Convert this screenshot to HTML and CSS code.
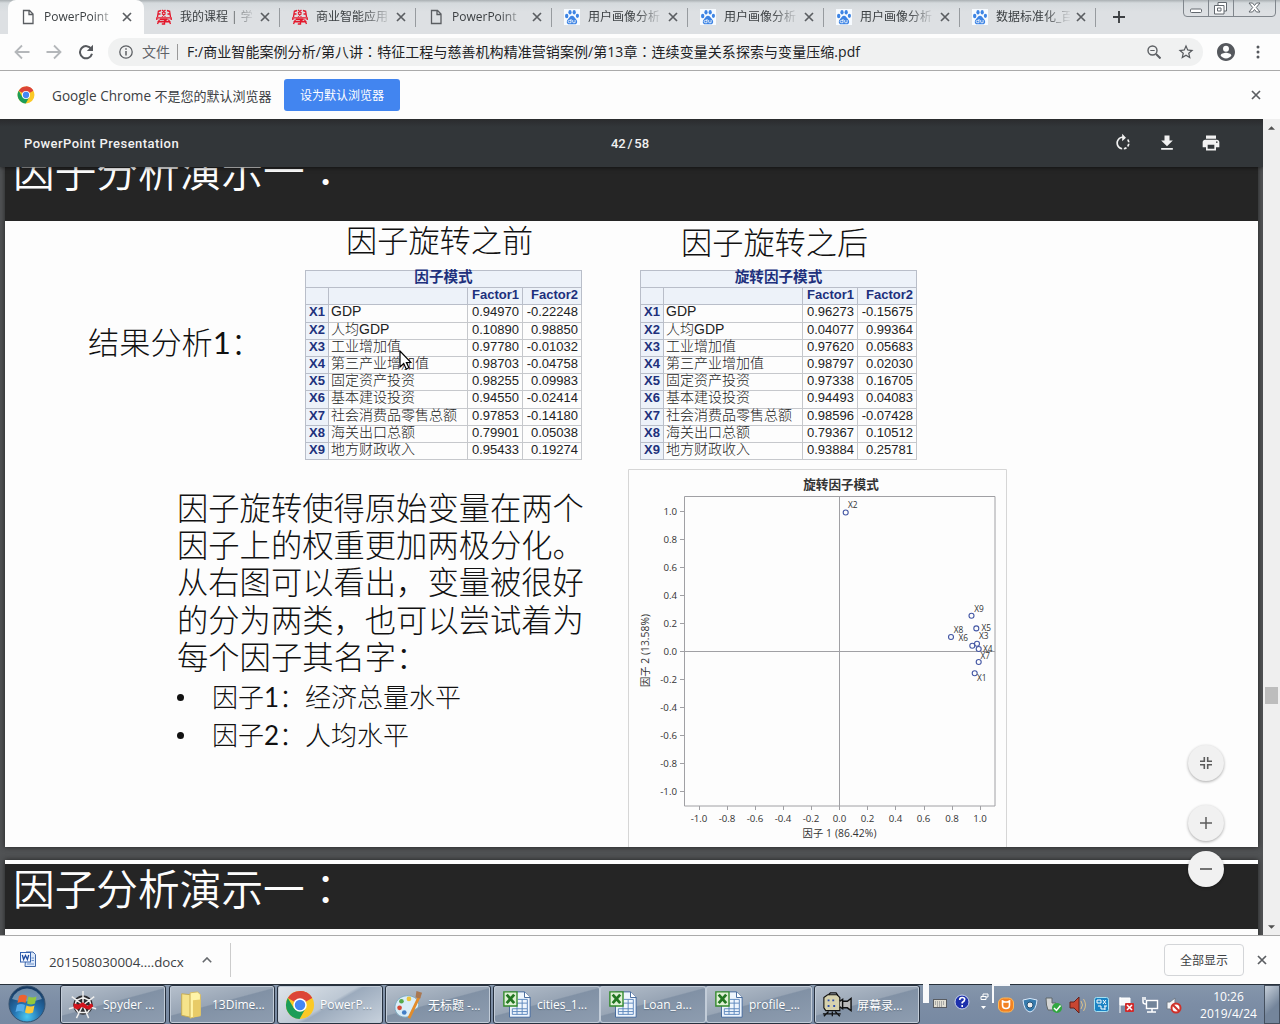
FILE: index.html
```html
<!DOCTYPE html>
<html lang="zh-CN">
<head>
<meta charset="utf-8">
<title>PowerPoint Presentation</title>
<link rel="stylesheet" href="styles.css">
</head>
<body>
<svg class="defs" width="0" height="0">
  <symbol id="x" viewBox="0 0 10 10"><path d="M1 1l8 8M9 1l-8 8" fill="none" stroke="currentColor" stroke-width="1.7"/></symbol>
  <symbol id="doc" viewBox="0 0 16 16"><path d="M3.500 1.500h6l3.500 3.500v9.500h-9.500zM9 1.500v4h4" fill="none" stroke="#5a5d61" stroke-width="1.300"/></symbol>
  <symbol id="xue" viewBox="0 0 16 16"><path d="M2.500 1.500L1.500 8M2 2.500l3-1M2 5h2.500M6 1l3.500 3M9.500 1L6 4M6 4.500L9.500 7.500M9.500 4.500L6 7.500M11 1.500l3 1M11.500 5H14M13.500 1.500l1 6.500M.8 11V8.800h14.400V11M4 10.500h7.500L8.500 12v3H5.800M1.500 12.700h13M3.500 10.500L1.500 15M12.500 10.500l2 4.500" fill="none" stroke="#e3172b" stroke-width="1.350"/></symbol>
  <symbol id="paw" viewBox="0 0 16 16"><rect width="16" height="16" fill="#f7fbff"/><g fill="#3d84e4"><ellipse cx="2.700" cy="7" rx="1.700" ry="2.200"/><ellipse cx="6" cy="3.200" rx="1.600" ry="2.300"/><ellipse cx="10.200" cy="3.200" rx="1.600" ry="2.300"/><ellipse cx="13.400" cy="6.800" rx="1.600" ry="2.100"/><path d="M8 6.800c2 0 2.600 2 4 3.400 1.900 1.800 1.400 5-1.200 5.100H5.200C2.500 15.200 2.100 12 4 10.200 5.400 8.800 6 6.800 8 6.800z"/></g><path d="M7 10v3.700H5.300a1.100 1.100 0 0 1 0-2.300H7M8.700 11v2q0 .7.700.7h1.700V11" fill="none" stroke="#fff" stroke-width=".8"/></symbol>
  <symbol id="chrome" viewBox="0 0 32 32"><circle cx="16" cy="16" r="15" fill="#fbc926"/><path d="M16 16L3 8.500A15 15 0 0 1 29 8.500z" fill="#dc4437"/><path d="M16 1a15 15 0 0 1 13 7.500H16z" fill="#dc4437"/><path d="M3 8.500A15 15 0 0 0 15.500 31L22 19.500l-6-3.500-6.500 3.500z" fill="#1c9d58"/><circle cx="16" cy="16" r="7.200" fill="#fff"/><circle cx="16" cy="16" r="5.600" fill="#4486f4"/></symbol>
  <symbol id="xls" viewBox="0 0 32 32"><path d="M8 2h16l6 6v21H8z" fill="#eef5fd" stroke="#41669b"/><path d="M24 2v6h6" fill="#fff" stroke="#41669b"/><path d="M11 20h16v6H11zM16 14h11v6M16 14v12M21.500 10v16M17 10h10v4M11 23h16" fill="none" stroke="#5c86bd"/><path d="M2 2h14v15H2z" fill="#dff0d5" stroke="#348b2e" stroke-width="1.500"/><path d="M5 5l8 9M13 5l-8 9" stroke="#237722" stroke-width="3"/></symbol>
</svg>

<div class="window">
  <header class="tabstrip">
    <div class="tab active"><svg class="fav"><use href="#doc"/></svg><span>PowerPoint</span><svg class="close"><use href="#x"/></svg></div>
    <div class="tab"><svg class="fav"><use href="#xue"/></svg><span>我的课程 | 学</span><svg class="close"><use href="#x"/></svg></div>
    <div class="tab"><svg class="fav"><use href="#xue"/></svg><span>商业智能应用</span><svg class="close"><use href="#x"/></svg></div>
    <div class="tab"><svg class="fav"><use href="#doc"/></svg><span>PowerPoint</span><svg class="close"><use href="#x"/></svg></div>
    <div class="tab"><svg class="fav"><use href="#paw"/></svg><span>用户画像分析</span><svg class="close"><use href="#x"/></svg></div>
    <div class="tab"><svg class="fav"><use href="#paw"/></svg><span>用户画像分析</span><svg class="close"><use href="#x"/></svg></div>
    <div class="tab"><svg class="fav"><use href="#paw"/></svg><span>用户画像分析</span><svg class="close"><use href="#x"/></svg></div>
    <div class="tab"><svg class="fav"><use href="#paw"/></svg><span>数据标准化_百</span><svg class="close"><use href="#x"/></svg></div>
    <svg class="newtab" viewBox="0 0 12 12"><path d="M6 0v12M0 6h12" stroke="#3d4043" stroke-width="1.900"/></svg>
    <svg class="winctl" viewBox="0 0 94 18"><path d="M.5 0v13q0 3.500 3.500 3.500h85q3.500 0 3.500-3.500V0M25.500 0v16M50.500 0v16" fill="none" stroke="#80868c"/><g fill="#fff" stroke="#62686e"><rect x="7.500" y="9" width="11" height="3.500" rx="1"/><path d="M35 2.500h8.500V11H41v3h-9.500V5.500H35z"/><path d="M34.500 8h3.500v3h-3.500zM35 5.500h6V11" fill="none"/><path d="M66 3h3.500l2 2.500L73.500 3H77l-3.700 4.500L77 12h-3.500l-2-2.500-2 2.500H66l3.700-4.500z"/></g></svg>
  </header>

  <nav class="toolbar">
    <svg class="nav" viewBox="0 0 16 16"><path d="M15.500 8H2M8 1.500L1.500 8 8 14.500" fill="none" stroke="#b4b7ba" stroke-width="1.800"/></svg>
    <svg class="nav" viewBox="0 0 16 16"><path d="M.5 8H14M8 1.500L14.500 8 8 14.500" fill="none" stroke="#b4b7ba" stroke-width="1.800"/></svg>
    <svg class="nav reload" viewBox="0 0 16 16"><path d="M13.300 5A6.100 6.100 0 1 0 14 9.800" fill="none" stroke="#56595d" stroke-width="2"/><path d="M15 .8V7H8.800z" fill="#56595d"/></svg>
    <div class="omnibox">
      <svg class="info" viewBox="0 0 14 14"><circle cx="7" cy="7" r="6.200" fill="none" stroke="#5c5f63" stroke-width="1.300"/><path d="M7 6v4.500M7 3.200v1.500" stroke="#5c5f63" stroke-width="1.500"/></svg>
      <span class="scheme">文件</span>
      <span class="url">F:/商业智能案例分析/第八讲<i lang="zh-TW">：</i>特征工程与慈善机构精准营销案例/第13章<i lang="zh-TW">：</i>连续变量关系探索与变量压缩.pdf</span>
      <svg class="zoomicon" viewBox="0 0 14 14"><circle cx="5.500" cy="5.500" r="4.500" fill="none" stroke="#5c5f63" stroke-width="1.400"/><path d="M9 9l4.500 4.500" stroke="#5c5f63" stroke-width="2"/><path d="M3.300 5.500h4.400" stroke="#5c5f63"/></svg>
      <svg class="star" viewBox="0 0 24 24"><path d="M22 9.240l-7.190-.62L12 2 9.190 8.630 2 9.240l5.460 4.730L5.820 21 12 17.270 18.180 21l-1.630-7.030L22 9.240zM12 15.400l-3.760 2.270 1-4.280-3.320-2.880 4.380-.38L12 6.100l1.710 4.040 4.380.38-3.320 2.880 1 4.280L12 15.400z" fill="#55585c"/></svg>
    </div>
    <svg class="avatar" viewBox="2 2 20 20"><path d="M12 2C6.480 2 2 6.480 2 12s4.480 10 10 10 10-4.480 10-10S17.520 2 12 2zm0 3a3.300 3.300 0 1 1 0 6.600A3.300 3.300 0 0 1 12 5zm0 14.200c-2.500 0-4.710-1.280-6-3.220.03-1.990 4-3.080 6-3.080 1.990 0 5.970 1.090 6 3.080-1.290 1.940-3.500 3.220-6 3.220z" fill="#55585d"/></svg>
    <svg class="menu" viewBox="0 0 4 14"><g fill="#55585d"><circle cx="2" cy="2" r="1.500"/><circle cx="2" cy="7" r="1.500"/><circle cx="2" cy="12" r="1.500"/></g></svg>
  </nav>

  <section class="infobar">
    <svg class="chromelogo"><use href="#chrome"/></svg>
    <span class="msg"><b>Google Chrome</b> 不是您的默认浏览器</span>
    <button>设为默认浏览器</button>
    <svg class="close"><use href="#x"/></svg>
  </section>

  <main class="viewer">
    <div class="pdf">
      <div class="pdfbar">
        <span class="doctitle">PowerPoint Presentation</span>
        <span class="page">42 / 58</span>
        <div class="tools">
          <svg viewBox="0 0 24 24"><path d="M15.550 5.550L11 1v3.070C7.060 4.560 4 7.920 4 12s3.050 7.440 7 7.930v-2.020c-2.840-.48-5-2.940-5-5.910s2.160-5.430 5-5.910V10l4.550-4.450zM19.930 11c-.17-1.390-.72-2.730-1.620-3.890l-1.420 1.420c.54.75.88 1.600 1.020 2.470h2.020zM13 17.900v2.020c1.390-.17 2.740-.71 3.900-1.610l-1.440-1.440c-.75.54-1.590.89-2.460 1.030zm3.890-2.420l1.420 1.410c.9-1.160 1.450-2.500 1.620-3.890h-2.020c-.14.87-.48 1.720-1.020 2.480z"/></svg>
          <svg viewBox="0 0 24 24"><path d="M19 9h-4V3H9v6H5l7 7 7-7zM5 18v2h14v-2H5z"/></svg>
          <svg viewBox="0 0 24 24"><path d="M19 8H5c-1.660 0-3 1.340-3 3v6h4v4h12v-4h4v-6c0-1.660-1.340-3-3-3zm-3 11H8v-5h8v5zm3-7c-.55 0-1-.45-1-1s.45-1 1-1 1 .45 1 1-.45 1-1 1zm-1-9H6v4h12V3z"/></svg>
        </div>
      </div>
      <article class="slide">
        <h1 class="current">因子分析演示一<i lang="zh-TW">：</i></h1>
        <div class="body">
          <div class="col">
            <div class="top">
              <p class="result">结果分析<b>1</b>：</p>
              <div class="figure before">
                <h2>因子旋转之前</h2>
                <table>
                  <colgroup><col class="c1"><col class="c2"><col class="c3"><col class="c4"></colgroup>
                  <tr class="head"><th colspan="4">因子模式</th></tr>
                  <tr class="head sub"><th></th><th></th><th>Factor1</th><th>Factor2</th></tr>
                  <tr><th>X1</th><td>GDP</td><td>0.94970</td><td>-0.22248</td></tr>
                  <tr><th>X2</th><td>人均GDP</td><td>0.10890</td><td>0.98850</td></tr>
                  <tr><th>X3</th><td>工业增加值</td><td>0.97780</td><td>-0.01032</td></tr>
                  <tr><th>X4</th><td>第三产业增加值</td><td>0.98703</td><td>-0.04758</td></tr>
                  <tr><th>X5</th><td>固定资产投资</td><td>0.98255</td><td>0.09983</td></tr>
                  <tr><th>X6</th><td>基本建设投资</td><td>0.94550</td><td>-0.02414</td></tr>
                  <tr><th>X7</th><td>社会消费品零售总额</td><td>0.97853</td><td>-0.14180</td></tr>
                  <tr><th>X8</th><td>海关出口总额</td><td>0.79901</td><td>0.05038</td></tr>
                  <tr><th>X9</th><td>地方财政收入</td><td>0.95433</td><td>0.19274</td></tr>
                </table>
              </div>
            </div>
            <div class="notes">
              <p>因子旋转使得原始变量在两个<br>因子上的权重更加两极分化。<br>从右图可以看出，变量被很好<br>的分为两类，也可以尝试着为<br>每个因子其名字：</p>
              <ul><li>因子<b>1</b>：经济总量水平</li><li>因子<b>2</b>：人均水平</li></ul>
            </div>
          </div>
          <div class="col">
            <div class="top">
              <div class="figure after">
                <h2>因子旋转之后</h2>
                <table>
                  <colgroup><col class="c1"><col class="c2"><col class="c3"><col class="c4"></colgroup>
                  <tr class="head"><th colspan="4">旋转因子模式</th></tr>
                  <tr class="head sub"><th></th><th></th><th>Factor1</th><th>Factor2</th></tr>
                  <tr><th>X1</th><td>GDP</td><td>0.96273</td><td>-0.15675</td></tr>
                  <tr><th>X2</th><td>人均GDP</td><td>0.04077</td><td>0.99364</td></tr>
                  <tr><th>X3</th><td>工业增加值</td><td>0.97620</td><td>0.05683</td></tr>
                  <tr><th>X4</th><td>第三产业增加值</td><td>0.98797</td><td>0.02030</td></tr>
                  <tr><th>X5</th><td>固定资产投资</td><td>0.97338</td><td>0.16705</td></tr>
                  <tr><th>X6</th><td>基本建设投资</td><td>0.94493</td><td>0.04083</td></tr>
                  <tr><th>X7</th><td>社会消费品零售总额</td><td>0.98596</td><td>-0.07428</td></tr>
                  <tr><th>X8</th><td>海关出口总额</td><td>0.79367</td><td>0.10512</td></tr>
                  <tr><th>X9</th><td>地方财政收入</td><td>0.93884</td><td>0.25781</td></tr>
                </table>
              </div>
            </div>
            <svg class="chart" viewBox="628 469 380 378">
              <path d="M628.500 847V469.500H1006.500V847" fill="none" stroke="#d6d6d6"/>
              <text class="ctitle" x="841" y="488.500" text-anchor="middle">旋转因子模式</text>
              <path d="M684.500 496.500h310.500v309.500H684.500zM839.500 496v314M680 651.500h315" fill="none" stroke="#a0a0a4"/>
              <path d="M680 511.500h5M680 539.500h5M680 567.500h5M680 595.500h5M680 623.500h5M680 679.500h5M680 707.500h5M680 735.500h5M680 763.500h5M680 791.500h5M699.500 806v4M727.500 806v4M755.500 806v4M783.500 806v4M811.500 806v4M867.500 806v4M895.500 806v4M924.500 806v4M952.500 806v4M980.500 806v4" stroke="#a0a0a4"/>
              <g text-anchor="end">
                <text x="677" y="515">1.0</text><text x="677" y="543">0.8</text><text x="677" y="571">0.6</text><text x="677" y="599">0.4</text><text x="677" y="627">0.2</text><text x="677" y="655">0.0</text><text x="677" y="683">-0.2</text><text x="677" y="711">-0.4</text><text x="677" y="739">-0.6</text><text x="677" y="767">-0.8</text><text x="677" y="795">-1.0</text>
              </g>
              <g text-anchor="middle">
                <text x="699" y="822">-1.0</text><text x="727" y="822">-0.8</text><text x="755" y="822">-0.6</text><text x="783" y="822">-0.4</text><text x="811" y="822">-0.2</text><text x="839.500" y="822">0.0</text><text x="867.500" y="822">0.2</text><text x="895.500" y="822">0.4</text><text x="923.500" y="822">0.6</text><text x="952" y="822">0.8</text><text x="980" y="822">1.0</text>
              </g>
              <text class="axis" x="802.500" y="837" textLength="74">因子 1 (86.42%)</text>
              <text class="axis" transform="translate(649 687) rotate(-90)" textLength="73">因子 2 (13.58%)</text>
              <g fill="none" stroke="#4457a4" stroke-width="1.100"><circle cx="845.700" cy="512.500" r="2.500"/><circle cx="971.500" cy="615.700" r="2.500"/><circle cx="976.300" cy="628.400" r="2.500"/><circle cx="951" cy="637" r="2.500"/><circle cx="977" cy="643.700" r="2.500"/><circle cx="972.300" cy="645.700" r="2.500"/><circle cx="978.700" cy="649" r="2.500"/><circle cx="978.700" cy="662" r="2.500"/><circle cx="974.700" cy="673.300" r="2.500"/></g>
              <g class="pt"><text x="848" y="508">X2</text><text x="974.300" y="612">X9</text><text x="981.500" y="631">X5</text><text x="953.800" y="633">X8</text><text x="979" y="639">X3</text><text x="958.500" y="641">X6</text><text x="983" y="652">X4</text><text x="980.500" y="659">X7</text><text x="977" y="681">X1</text></g>
            </svg>
          </div>
        </div>
      </article>
      <article class="slide next">
        <h1>因子分析演示一<i lang="zh-TW">：</i></h1>
      </article>
      <svg class="cursor" viewBox="0 0 13 20"><path d="M1 1v16l3.700-3.500 2.500 5.500 2.700-1.200-2.500-5.300H12z" fill="#fff" stroke="#000" stroke-width="1.200"/></svg>
      <div class="fabs">
        <div class="fab fit"><svg viewBox="0 0 12 12"><path d="M4.300 0v4.300H0M7.700 0v4.300H12M4.300 12V7.700H0M7.700 12V7.700H12" fill="none" stroke="#5c5c5c" stroke-width="1.600"/></svg></div>
        <div class="fab"><svg viewBox="0 0 12 12"><path d="M6 0v12M0 6h12" stroke="#5c5c5c" stroke-width="1.500"/></svg></div>
        <div class="fab out"><svg viewBox="0 0 12 12"><path d="M0 6h12" stroke="#5c5c5c" stroke-width="1.700"/></svg></div>
      </div>
    </div>
    <div class="scroll">
      <svg viewBox="0 0 8 4"><path d="M0 4l4-4 4 4z" fill="#505050"/></svg>
      <div class="thumb"></div>
      <svg viewBox="0 0 8 4"><path d="M0 0l4 4 4-4z" fill="#505050"/></svg>
    </div>
  </main>

  <section class="downloads">
    <svg class="word" viewBox="0 0 16 16"><path d="M6 1h7l2.500 2.500V15.500H5z" fill="#dbe8fa" stroke="#4168a8"/><path d="M11.500 7H14M11.500 9.500H14M7 13h7" stroke="#6c90c8"/><rect x=".5" y="1.500" width="10" height="9.500" fill="#f4f8ff" stroke="#3563b0"/><path d="M2.300 4l1.300 4.500L5.500 4.500l1.900 4L8.700 4" fill="none" stroke="#1e4b9f" stroke-width="1.300"/></svg>
    <span class="file">201508030004....docx</span>
    <svg class="chev" viewBox="0 0 10 6"><path d="M.8 5.300L5 1l4.200 4.300" fill="none" stroke="#66696d" stroke-width="1.600"/></svg>
    <button>全部显示</button>
    <svg class="close"><use href="#x"/></svg>
  </section>

  <footer class="taskbar">
    <svg class="start" viewBox="0 0 38 38"><defs><radialGradient id="orb" cx=".5" cy=".85" r=".8"><stop offset="0" stop-color="#49c9f2"/><stop offset=".45" stop-color="#2573b1"/><stop offset="1" stop-color="#173a63"/></radialGradient></defs><circle cx="19" cy="19" r="18" fill="url(#orb)" stroke="#34516e"/><path d="M4 14a16 16 0 0 1 30 0q-15 5-30 0z" fill="#a9bccd" opacity=".6"/><path d="M11 11q4-2.500 8 0l-1.500 7q-4-2-8 0z" fill="#ee6230"/><path d="M20.500 11.500q4 2 8 0L27 18.500q-4 2-8 0z" fill="#93c83e"/><path d="M9 20q4-2.200 8 0l-1.500 7q-4-2.200-8 0z" fill="#56acea"/><path d="M18.500 20.500q4 2 8 0L25 27.500q-4 2-8 0z" fill="#fcc93b"/></svg>
    <div class="task first"><svg viewBox="0 0 32 32"><circle cx="16" cy="16" r="10.500" fill="#2b2b2e"/><path d="M16 16V1M16 16l12-9M16 16l14 4M16 16l6 14M16 16L9 30M16 16L1 20M16 16L4 7M16 8l7 3 2 7-4 6H11l-4-6 2-7z" fill="none" stroke="#eee" stroke-width="1.600"/><path d="M6 14l5 1.500 5-2.500 5 4 4-3 2 3-4 4-4-1-4-2-5 3-4-2z" fill="#d2141d"/></svg><span>Spyder ...</span></div>
    <div class="task"><svg viewBox="0 0 32 32"><path d="M5 4l9 1v24l-9-2z" fill="#f6e38b" stroke="#c7ac50"/><path d="M14 3l8-1 3 3v22l-11 3z" fill="#fff4a8" stroke="#d6bc61"/><path d="M17 11l8-1v18l-8 1z" fill="#e8cb67"/></svg><span>13Dime...</span></div>
    <div class="task lit"><svg><use href="#chrome"/></svg><span>PowerP...</span></div>
    <div class="task"><svg viewBox="0 0 32 32"><path d="M4 12C9 4 24 4 27 13c2 7-3 7-6 9-3 3-2 7-8 7C4 29-1 20 4 12z" fill="#d9edf8" stroke="#7ba5bd"/><circle cx="9" cy="12" r="2.500" fill="#56a94d"/><circle cx="17" cy="9.500" r="2.500" fill="#ecc43b"/><circle cx="7" cy="19" r="2.500" fill="#d84a36"/><circle cx="12" cy="24" r="2.500" fill="#437ec6"/><path d="M17 30L28 7" stroke="#e28c2b" stroke-width="3"/><path d="M25 1l6 2-2 6-5-1z" fill="#a97752"/></svg><span>无标题 -...</span></div>
    <div class="group">
      <div class="task"><svg><use href="#xls"/></svg><span>cities_1...</span></div>
      <div class="task"><svg><use href="#xls"/></svg><span>Loan_a...</span></div>
      <div class="task"><svg><use href="#xls"/></svg><span>profile_...</span></div>
    </div>
    <div class="task rec"><svg viewBox="0 0 32 26"><path d="M2 5l4-3h10l3 3v14H4l-2-3z" fill="#d6d2ae" stroke="#111" stroke-width="1.200"/><path d="M19 9l3-2v10l-3-2M22 9h5l4-3v13l-4-3h-5" fill="#bbb" stroke="#111" stroke-width="1.500"/><path d="M7 20l-5 5M11 20v5M14 20l5 5M1 22.500h19M7 2l2-2h6l2 3" fill="none" stroke="#111" stroke-width="1.400"/><path d="M6 7h2v2H6zM11 7h2v2h-2zM6 13h2v2H6zM12 13h2v2h-2z" fill="#2c4eae"/></svg><span>屏幕录...</span></div>
    <svg class="tray" viewBox="920 984 280 40">
      <path d="M923 984h6v19h-6zM992 984h2v19h-2zM992 984h18v2h-18z" fill="#f8f9fb"/>
      <rect x="933.500" y="999.500" width="13" height="8" fill="#e2dfd3" stroke="#595c61"/><path d="M935 1002h10M935 1004h10M937 1006h6" stroke="#70747a" stroke-dasharray="1 1"/>
      <circle cx="962" cy="1002" r="7" fill="#1c30ac" stroke="#c8d3ec"/><path d="M959.700 1000q0-2.500 2.500-2.500t2.500 2q0 1.500-2.500 3v1M962.200 1005v2" fill="none" stroke="#fff" stroke-width="1.600"/>
      <path d="M981 996.500h5v3h-5zM983 996v-2h5v3h-2" fill="none" stroke="#fff"/><path d="M981 1006h5l-2.500 3z" fill="#fff"/>
      <rect x="998.500" y="998" width="15" height="14" rx="5" fill="#f28122" stroke="#ffba58"/><path d="M1002.500 1001l2 1h3l2-1v4q0 3.500-3.500 3.500t-3.500-3.500z" fill="none" stroke="#fff" stroke-width="1.600"/>
      <path d="M1023 1000q7-3 14 0-1 11-7 12-6-1-7-12z" fill="#377bad" stroke="#dbeafb"/><circle cx="1030" cy="1005" r="3" fill="#eee" stroke="#265174"/>
      <path d="M1046 998h6v5h4v7h-8q-2-4-2-12" fill="#d1d3d3" stroke="#5e6668"/><circle cx="1057" cy="1008" r="5" fill="#32a740"/><path d="M1054 1008l2.500 2.500 4-5" fill="none" stroke="#fff" stroke-width="1.500"/>
      <path d="M1070 1002h4l5-5v16l-5-5h-4z" fill="#c84632" stroke="#65211b"/><path d="M1081 1001q3 4 0 8M1083.500 999q4 6 0 12" fill="none" stroke="#dac18b"/>
      <rect x="1094.500" y="997.500" width="14" height="14" rx="2" fill="#1b83c4" stroke="#a3e1f4"/><path d="M1097 1000h4v3h-4zM1103 1000l3 4M1106 1000l-3 4M1098 1006h3v3h4M1104 1006h3M1105 1006v4" fill="none" stroke="#fff"/>
      <path d="M1120 997v16M1120 998h10v7h-10z" fill="#f7f8fa" stroke="#fff"/><rect x="1125" y="1003" width="9" height="9" rx="1" fill="#d22a2b"/><path d="M1127 1005l5 5M1132 1005l-5 5" stroke="#fff" stroke-width="1.600"/>
      <rect x="1146.500" y="1000.500" width="11" height="8" fill="#728499" stroke="#fff" stroke-width="1.400"/><path d="M1143 997v5q0 2 3 2M1145 997v3M1152 1009v3M1147 1012h9" fill="none" stroke="#fff" stroke-width="1.500"/>
      <path d="M1167 1002h3l5-4v15l-5-4h-3z" fill="#f2f4f7" stroke="#727d89"/><circle cx="1176" cy="1008" r="4.500" fill="#fff" stroke="#cf312a" stroke-width="2"/><path d="M1173 1005l6 6" stroke="#cf312a" stroke-width="2"/>
    </svg>
    <div class="clock"><span>10:26</span><span>2019/4/24</span></div>
    <div class="peek"></div>
  </footer>
</div>
</body>
</html>
```
FILE: styles.css
```css
* { box-sizing: border-box; }
body { margin: 0; font-family: "Open Sans", "Noto Sans CJK SC", sans-serif; font-size: 12px; color: #3c4043; }
svg { display: block; flex: none; }
i { font-style: normal; font-family: "Noto Sans CJK TC", sans-serif; }
button { font: inherit; padding: 0; }
.defs { position: absolute; }
.window { width: 1280px; height: 1024px; display: flex; flex-direction: column; overflow: hidden; background: #fdfdfd; }

.tabstrip { height: 34px; display: flex; background: linear-gradient(#a9afb2 0, #d5dadd 3px, #dde0e3 12px); padding-left: 8px; flex: none; }
.tab { width: 136px; display: flex; align-items: center; padding-left: 12px; position: relative; }
.tab:not(.active)::after { content: ""; position: absolute; right: 0; top: 8px; width: 1px; height: 19px; background: #979b9f; }
.tab.active { background: #fdfdfd; border-radius: 8px 8px 0 0; }
.fav { width: 16px; height: 16px; }
.tab span { width: 74px; margin: 0 6px 0 8px; overflow: hidden; white-space: nowrap; line-height: 20px; -webkit-mask-image: linear-gradient(90deg, #000 48px, transparent 76px); mask-image: linear-gradient(90deg, #000 48px, transparent 76px); }
.tab.active span { width: 73px; margin-right: 5px; }
.close { width: 10px; height: 10px; color: #5b5e62; }
.newtab { width: 12px; height: 12px; margin: 11px 0 0 17px; }
.winctl { width: 94px; height: 18px; margin-left: auto; margin-right: 3px; }

.toolbar { height: 37px; display: flex; align-items: center; border-bottom: 1px solid #aaa; padding-left: 14px; flex: none; }
.nav { width: 16px; height: 16px; margin-right: 16px; }
.reload { margin-right: 14px; }
.omnibox { width: 1095px; height: 28px; border-radius: 14px; background: #f0f1f1; display: flex; align-items: center; padding-left: 11px; }
.info { width: 14px; height: 14px; }
.scheme { font-size: 14px; margin-left: 9px; color: #5f6368; border-right: 1px solid #999; padding-right: 7px; line-height: 16px; }
.url { font-size: 14px; margin: -2px 0 0 9px; letter-spacing: .06px; color: #202124; white-space: nowrap; }
.zoomicon { width: 14px; height: 14px; margin-left: auto; }
.star { width: 18px; height: 18px; margin: 0 8px 0 16px; }
.avatar { width: 18px; height: 18px; margin-left: 14px; }
.menu { width: 4px; height: 14px; margin-left: 21px; }

.infobar { height: 48px; display: flex; align-items: center; padding-left: 17px; flex: none; }
.chromelogo { width: 18px; height: 18px; }
.msg { width: 249px; padding-left: 17px; font-size: 13px; white-space: nowrap; flex: none; }
.msg b { font-weight: 400; font-size: 13.600px; }
.infobar button { width: 116px; height: 32px; border: 0; border-radius: 3px; background: #4285f0; color: #fff; }
.infobar .close { margin: 0 19px 0 auto; }

.viewer { height: 816px; display: flex; flex: none; overflow: hidden; }
.pdf { width: 1263px; height: 816px; background: #505254; overflow: hidden; position: relative; }
.pdfbar { height: 48px; background: linear-gradient(#2a2b2d, #323639 8px); display: grid; grid-template-columns: 1fr 80px 1fr; align-items: center; color: #f1f1f1; font: 500 13px Roboto, sans-serif; position: relative; box-shadow: 0 1px 4px #0008; }
.doctitle { padding-left: 24px; letter-spacing: .45px; }
.page { text-align: center; word-spacing: -1.500px; padding-right: 3px; }
.tools { display: flex; gap: 24px; justify-content: flex-end; padding-right: 42px; }
.tools svg { width: 20px; height: 20px; fill: #f1f1f1; }
.slide { width: 1253px; margin-left: 5px; background: #fdfdfd; box-shadow: 0 0 5px #222; }
.slide h1 { margin: 0; height: 65px; background: #252525; color: #fdfdfd; font: 350 41.700px/42px "Noto Sans CJK SC", sans-serif; padding: 2px 0 0 8px; overflow: hidden; }
.slide h1.current { height: 54px; padding: 0 0 0 8px; line-height: 5px; }
.slide.next { margin-top: 13px; border-top: 4px solid #fff; height: 90px; }
.body { display: grid; grid-template-columns: 623px 1fr; height: 626px; color: #111; }
.body b { font-weight: 400; }
.top { height: 248px; display: flex; }
.result { width: 300px; margin: 0; padding: 99px 0 0 83px; font: 300 31.200px/44px Lato, "Noto Sans CJK SC", sans-serif; white-space: nowrap; }
.figure h2 { margin: 0 0 0 41px; height: 49px; font: 300 31.200px/35px "Noto Sans CJK SC", sans-serif; white-space: nowrap; }
.after { padding-left: 12px; }
.after h2 { line-height: 39px; }
table { border-collapse: collapse; table-layout: fixed; width: 276px; font: 13px/13px "Liberation Sans", "Noto Sans CJK SC", sans-serif; color: #222; }
.c1 { width: 23px; } .c2 { width: 139px; } .c3 { width: 55px; } .c4 { width: 59px; }
tr { height: 17.200px; }
th, td { padding: 0 0 3px; border: 1px solid #b9bec9; text-align: right; white-space: nowrap; line-height: 13px; }
td { padding-right: 3px; border-color: #c6c8cc; }
td:nth-child(2) { text-align: left; padding-left: 2px; font-size: 14px; font-weight: 300; }
th { background: #edf2f9; color: #20307c; text-align: center; }
.head th { font-size: 14.600px; }
.head.sub th { font-size: 13px; text-align: right; padding-right: 3px; }
.notes { padding: 21px 0 0 172px; font: 300 31.300px/37.200px Lato, "Noto Sans CJK SC", sans-serif; white-space: nowrap; }
.notes p { margin: 0; }
.notes ul { margin: 2px 0 0; padding: 0; list-style: none; font-size: 26px; line-height: 38px; }
.notes li { display: flex; align-items: center; }
.notes li::before { content: ""; width: 7px; height: 7px; border-radius: 50%; background: #111; margin-right: 28px; }
.chart { width: 380px; height: 378px; font: 9.700px "Open Sans", "Noto Sans CJK SC", sans-serif; fill: #333; }
.ctitle { font-size: 12.600px; font-weight: 700; }
.axis { font-size: 10.300px; }
.pt { font-size: 8.300px; }
.cursor { position: absolute; left: 399px; top: 231px; width: 13px; height: 20px; }
.fabs { position: absolute; left: 1188px; top: 626px; }
.fab { width: 36px; height: 36px; border-radius: 50%; background: #f1f1f1; box-shadow: 0 1px 3px #0005; display: flex; align-items: center; justify-content: center; margin-bottom: 10px; }
.fab.fit { margin-bottom: 24px; }
.fab svg { width: 12px; height: 12px; }
.scroll { width: 17px; background: #efefef; display: flex; flex-direction: column; align-items: center; padding: 7px 0 6px; }
.scroll svg { width: 7px; height: 4px; }
.thumb { width: 13px; height: 17px; background: #bdbdbd; margin: 557px 0 auto; }

.downloads { height: 49px; border-top: 1px solid #aaa; display: flex; align-items: center; padding-left: 20px; flex: none; }
.word { width: 16px; height: 16px; margin-top: -3px; }
.file { width: 146px; padding-left: 13px; font-size: 13.300px; padding-top: 4px; white-space: nowrap; }
.chev { box-sizing: content-box; width: 10px; height: 6px; margin-left: 20px; padding: 14px 18px 14px 0; border-right: 1px solid #ccc; }
.downloads button { width: 80px; height: 32px; border: 1px solid #d3d5d8; border-radius: 4px; background: #fdfdfd; margin-left: auto; color: #3c4043; }
.downloads .close { margin: 0 13px; }

.taskbar { height: 40px; display: flex; background: linear-gradient(#8596ab, #7c8da5 50%, #7789a2); border-top: 1px solid #28313b; flex: none; color: #fff; padding-left: 8px; }
.start { width: 38px; height: 38px; margin-right: 14px; }
.task { width: 106px; flex: none; margin-right: 2px; height: 39px; border: 1px solid #27313f; border-radius: 3px; box-shadow: inset 0 0 0 1px #c2ccd8; display: flex; align-items: center; padding-left: 7px; background: linear-gradient(165deg, #b6c0cc, #98a5b5 45%, #8191a5 47%, #8e9db0); }
.task.first { margin-right: 3px; }
.task svg { width: 30px; height: 30px; }
.task span { margin-left: 5px; width: 58px; text-shadow: 0 1px 1px #4568; white-space: nowrap; }
.task.lit { background: linear-gradient(150deg, #e0e5eb, #bdc8d4 48%, #9cabbd 52%, #c8d2dd); }
.group { display: flex; width: 319px; flex: none; margin-right: 2px; border: 1px solid #27313f; border-radius: 3px; }
.group .task { margin: 0; border: 0; height: 37px; width: 106px; padding-left: 8px; }
.rec svg { height: 26px; }
.tray { width: 280px; height: 40px; margin: -1px -5px 0 -2px; }
.clock { width: 67px; flex: none; display: flex; flex-direction: column; line-height: 17px; padding-top: 3px; text-align: center; }
.peek { width: 16px; margin-left: auto; border: 1px solid #444f5e; background: linear-gradient(135deg, #c7d0da, #74859b 60%); }
```
